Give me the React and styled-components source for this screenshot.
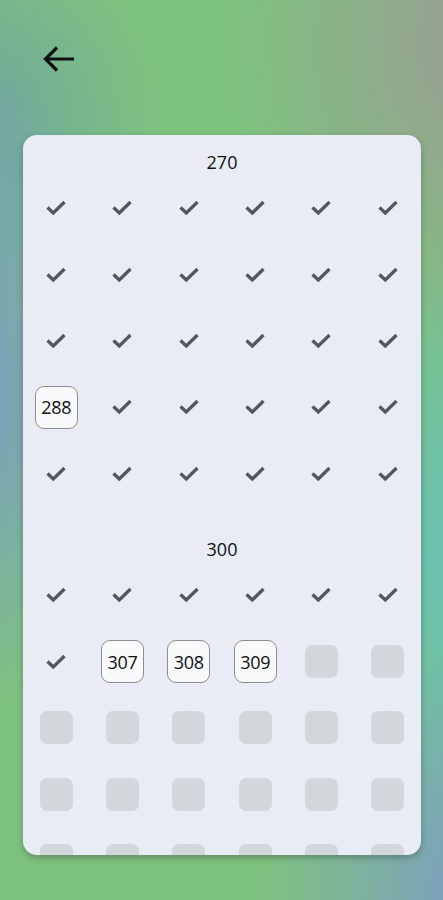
import React from 'react';
import styled, { createGlobalStyle } from 'styled-components';

const GlobalStyle = createGlobalStyle`
  html, body {
    margin: 0;
    padding: 0;
  }
  body {
    font-family: 'Open Sans', 'Noto Sans', sans-serif;
  }
`;

const Page = styled.div`
  width: 443px;
  height: 900px;
  overflow: hidden;
  display: flex;
  flex-direction: column;
  background:
    radial-gradient(ellipse 260px 330px at 490px 40px, rgba(155, 155, 148, 1), rgba(155, 155, 148, 0) 100%),
    radial-gradient(ellipse 190px 330px at -50px 390px, rgba(122, 152, 205, 1), rgba(122, 152, 205, 0) 100%),
    radial-gradient(ellipse 200px 200px at -40px 120px, rgba(108, 160, 165, 0.9), rgba(108, 160, 165, 0) 100%),
    radial-gradient(ellipse 260px 260px at 520px 900px, rgba(125, 150, 210, 1), rgba(125, 150, 210, 0) 100%),
    radial-gradient(ellipse 210px 330px at 490px 560px, rgba(100, 192, 188, 1), rgba(100, 192, 188, 0) 100%),
    #7ec27f;
`;

const TopBar = styled.div`
  height: 135px;
  padding: 42px 0 0 40px;
  box-sizing: border-box;
`;

const BackButton = styled.button`
  width: 38px;
  height: 34px;
  padding: 0;
  border: none;
  background: transparent;
  display: flex;
  align-items: center;
  justify-content: center;
  cursor: pointer;
`;

const Card = styled.div`
  margin: 0 22px 0 23px;
  height: 720px;
  overflow: hidden;
  border-radius: 14px;
  background: #e9ecf4;
  box-shadow: 0 3px 6px rgba(40, 60, 50, 0.35);
  display: flex;
  flex-direction: column;
  gap: 15px;
`;

const Section = styled.div`
  display: flex;
  flex-direction: column;
`;

const SectionTitle = styled.div`
  height: 40px;
  padding-top: 16px;
  box-sizing: border-box;
  text-align: center;
  font-size: 18px;
  line-height: 22px;
  color: #111;
`;

const Grid = styled.div`
  display: grid;
  grid-template-columns: repeat(6, 1fr);
  grid-auto-rows: 66.4px;
`;

const Cell = styled.div`
  display: flex;
  align-items: center;
  justify-content: center;
`;

const NumberTile = styled.div`
  width: 41px;
  height: 41px;
  border: 1px solid #8c8e90;
  border-radius: 9px;
  background: #f8f9fb;
  display: flex;
  align-items: center;
  justify-content: center;
  font-size: 18px;
  color: #111;
  letter-spacing: -0.3px;
`;

const EmptyTile = styled.div`
  width: 33px;
  height: 33px;
  border-radius: 7px;
  background: #d3d7dc;
`;

const Check = () => (
  <svg width="24" height="24" viewBox="0 0 24 24" fill="none">
    <path d="M3.5 11.5 L9.3 17 L20.5 6" stroke="#53575c" strokeWidth="3.3" strokeLinecap="butt" strokeLinejoin="miter" />
  </svg>
);

const ArrowLeft = () => (
  <svg width="36" height="32" viewBox="0 0 36 32" fill="none">
    <path d="M33 16 H5 M16 4.5 L4.5 16 L16 27.5" stroke="#111" strokeWidth="3.2" strokeLinecap="butt" strokeLinejoin="miter" />
  </svg>
);

const solved = new Set();
for (let n = 270; n < 300; n++) if (n !== 288) solved.add(n);
for (let n = 300; n <= 306; n++) solved.add(n);
const open = new Set([288, 307, 308, 309]);

const sections = [270, 300];

function Tile({ n }) {
  if (solved.has(n)) return <Check />;
  if (open.has(n)) return <NumberTile>{n}</NumberTile>;
  return <EmptyTile />;
}

export default function App() {
  return (
    <>
      <GlobalStyle />
      <Page>
        <TopBar>
          <BackButton aria-label="back">
            <ArrowLeft />
          </BackButton>
        </TopBar>
        <Card>
          {sections.map((start) => (
            <Section key={start}>
              <SectionTitle>{start}</SectionTitle>
              <Grid>
                {Array.from({ length: 30 }, (_, i) => start + i).map((n) => (
                  <Cell key={n}>
                    <Tile n={n} />
                  </Cell>
                ))}
              </Grid>
            </Section>
          ))}
        </Card>
      </Page>
    </>
  );
}
